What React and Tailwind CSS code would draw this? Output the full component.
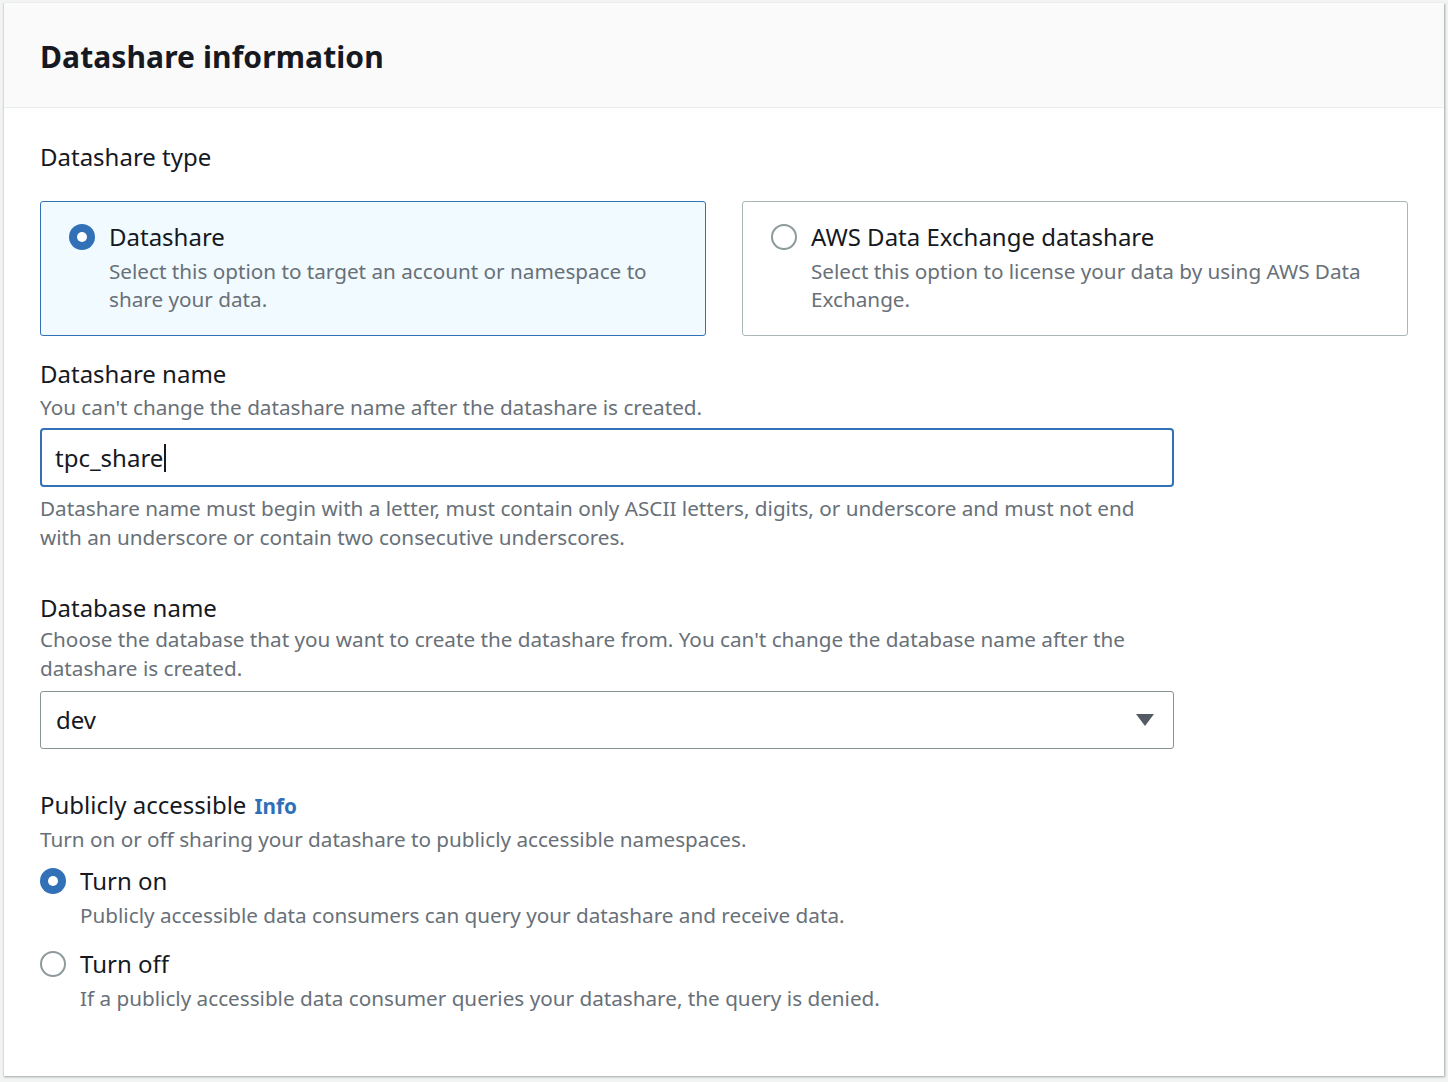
import React from "react";

function Radio({ checked }) {
  return checked ? (
    <div className="flex h-[26px] w-[26px] shrink-0 items-center justify-center rounded-full bg-[#3271b8]">
      <div className="h-[10px] w-[10px] rounded-full bg-white" />
    </div>
  ) : (
    <div className="h-[26px] w-[26px] shrink-0 rounded-full border-2 border-[#8d9a9b] bg-white" />
  );
}

export default function App() {
  return (
    <div className="min-h-[1082px] w-[1448px] bg-[#f2f3f3] pl-[3px] pt-[3px] text-[#16191f] [font-family:'Noto_Sans',sans-serif]">
      <div className="h-[1073px] w-[1441px] border-l border-[#d5dbdb] bg-white shadow-[1px_1px_2px_rgba(0,28,36,0.35)]">
        <div className="flex h-[105px] items-center border-b border-[#eaeded] bg-[#fafafa] px-[36px]">
          <h2 className="pt-[3px] text-[30px] font-bold leading-none tracking-[0.1px]">Datashare information</h2>
        </div>
        <div className="px-[36px] pt-[34px]">
          <div className="text-[24px] leading-[30px]">Datashare type</div>
          <div className="mt-[29px] grid grid-cols-2 gap-[36px]">
            <div className="flex h-[135px] gap-[14px] rounded-[3px] border border-[#3271b8] bg-[#f1faff] px-[28px] pt-[21px]">
              <div className="pt-[1px]"><Radio checked /></div>
              <div>
                <div className="text-[24px] leading-[28px]">Datashare</div>
                <div className="mt-[6px] text-[20.7px] leading-[28px] text-[#687078]">
                  Select this option to target an account or namespace to share your data.
                </div>
              </div>
            </div>
            <div className="flex h-[135px] gap-[14px] rounded-[3px] border border-[#aab7b8] bg-white px-[28px] pt-[21px]">
              <div className="pt-[1px]"><Radio /></div>
              <div>
                <div className="text-[24px] leading-[28px]">AWS Data Exchange datashare</div>
                <div className="mt-[6px] text-[20.7px] leading-[28px] text-[#687078]">
                  Select this option to license your data by using AWS Data Exchange.
                </div>
              </div>
            </div>
          </div>

          <div className="w-[1134px]">
            <div className="mt-[22px] text-[24px] leading-[32px]">Datashare name</div>
            <div className="mt-[1px] text-[20.7px] leading-[32px] text-[#687078]">
              You can't change the datashare name after the datashare is created.
            </div>
            <div className="mt-[5px] flex h-[59px] items-center rounded-[4px] border-2 border-[#3271b8] px-[13px] text-[24px]">
              <span>tpc_share</span>
              <span className="ml-[1px] h-[28px] w-[2px] bg-[#16191f]" />
            </div>
            <div className="mt-[7px] text-[20.7px] leading-[29px] text-[#687078]">
              Datashare name must begin with a letter, must contain only ASCII letters, digits, or underscore and must not end with an underscore or contain two consecutive underscores.
            </div>

            <div className="mt-[40px] text-[24px] leading-[32px]">Database name</div>
            <div className="mt-[1px] text-[20.7px] leading-[29px] text-[#687078]">
              Choose the database that you want to create the datashare from. You can't change the database name after the datashare is created.
            </div>
            <div className="mt-[8px] flex h-[58px] items-center justify-between rounded-[3px] border border-[#879596] pl-[15px] pr-[18px] text-[24px]">
              <span>dev</span>
              <svg width="20" height="14" viewBox="0 0 20 14"><path d="M1 1 H19 L10 13 Z" fill="#545b64" /></svg>
            </div>

            <div className="mt-[40px] flex items-baseline gap-[8px]">
              <span className="text-[24px] leading-[32px]">Publicly accessible</span>
              <span className="text-[20.7px] font-bold text-[#2f6fba]">Info</span>
            </div>
            <div className="mt-[1px] text-[20.7px] leading-[32px] text-[#687078]">
              Turn on or off sharing your datashare to publicly accessible namespaces.
            </div>
            <div className="mt-[10px] flex gap-[14px]">
              <div className="pt-[3px]"><Radio checked /></div>
              <div>
                <div className="text-[24px] leading-[32px]">Turn on</div>
                <div className="mt-[2px] text-[20.7px] leading-[32px] text-[#687078]">
                  Publicly accessible data consumers can query your datashare and receive data.
                </div>
              </div>
            </div>
            <div className="mt-[17px] flex gap-[14px]">
              <div className="pt-[3px]"><Radio /></div>
              <div>
                <div className="text-[24px] leading-[32px]">Turn off</div>
                <div className="mt-[2px] text-[20.7px] leading-[32px] text-[#687078]">
                  If a publicly accessible data consumer queries your datashare, the query is denied.
                </div>
              </div>
            </div>
          </div>
        </div>
      </div>
    </div>
  );
}
